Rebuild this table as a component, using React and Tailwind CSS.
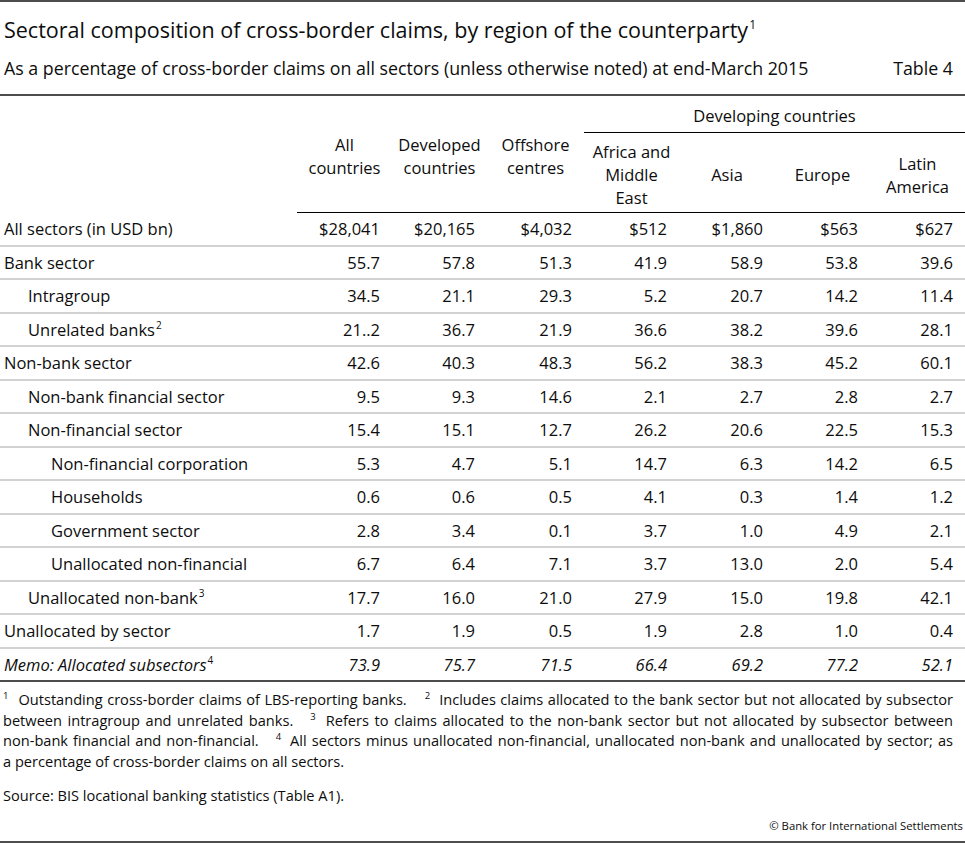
import React from 'react';

const rows = [
  { label: 'All sectors (in USD bn)', lvl: 0, v: ['$28,041', '$20,165', '$4,032', '$512', '$1,860', '$563', '$627'] },
  { label: 'Bank sector', lvl: 0, v: ['55.7', '57.8', '51.3', '41.9', '58.9', '53.8', '39.6'] },
  { label: 'Intragroup', lvl: 1, v: ['34.5', '21.1', '29.3', '5.2', '20.7', '14.2', '11.4'] },
  { label: 'Unrelated banks', sup: '2', lvl: 1, v: ['21..2', '36.7', '21.9', '36.6', '38.2', '39.6', '28.1'] },
  { label: 'Non-bank sector', lvl: 0, v: ['42.6', '40.3', '48.3', '56.2', '38.3', '45.2', '60.1'] },
  { label: 'Non-bank financial sector', lvl: 1, v: ['9.5', '9.3', '14.6', '2.1', '2.7', '2.8', '2.7'] },
  { label: 'Non-financial sector', lvl: 1, v: ['15.4', '15.1', '12.7', '26.2', '20.6', '22.5', '15.3'] },
  { label: 'Non-financial corporation', lvl: 2, v: ['5.3', '4.7', '5.1', '14.7', '6.3', '14.2', '6.5'] },
  { label: 'Households', lvl: 2, v: ['0.6', '0.6', '0.5', '4.1', '0.3', '1.4', '1.2'] },
  { label: 'Government sector', lvl: 2, v: ['2.8', '3.4', '0.1', '3.7', '1.0', '4.9', '2.1'] },
  { label: 'Unallocated non-financial', lvl: 2, v: ['6.7', '6.4', '7.1', '3.7', '13.0', '2.0', '5.4'] },
  { label: 'Unallocated non-bank', sup: '3', lvl: 1, v: ['17.7', '16.0', '21.0', '27.9', '15.0', '19.8', '42.1'] },
  { label: 'Unallocated by sector', lvl: 0, v: ['1.7', '1.9', '0.5', '1.9', '2.8', '1.0', '0.4'] },
  { label: 'Memo: Allocated subsectors', sup: '4', lvl: 0, italic: true, v: ['73.9', '75.7', '71.5', '66.4', '69.2', '77.2', '52.1'] },
];

const indent = ['pl-[4px]', 'pl-[28px]', 'pl-[51px]'];
const gridCols = 'grid grid-cols-[297px_95px_95px_97px_95px_96px_95px_95px]';

function Sup({ children }) {
  return <span className="relative -top-[7px] text-[10px] leading-none ml-[1px] not-italic">{children}</span>;
}

function FSup({ children }) {
  return <span className="relative -top-[6px] text-[9.5px] leading-none">{children}</span>;
}

const Gap = ({ w }) => <span className={`inline-block ${w}`} />;

export default function App() {
  return (
    <div className="w-[965px] h-[843px] bg-white text-[#0d0d0d] font-['Open_Sans','Noto_Sans',sans-serif] flex flex-col">
      <div className="h-[2px] bg-[#4d4d4d] shrink-0" />
      <div className="pl-[4px] mt-[14px] h-[28px] text-[21.5px] leading-[28px] whitespace-nowrap">
        Sectoral composition of cross-border claims, by region of the counterparty
        <span className="relative -top-[9px] text-[12px] leading-none ml-[1px]">1</span>
      </div>
      <div className="flex justify-between pl-[4px] pr-[12px] mt-[13px] h-[22px] text-[17.8px] leading-[22px] whitespace-nowrap">
        <span>As a percentage of cross-border claims on all sectors (unless otherwise noted) at end-March 2015</span>
        <span>Table 4</span>
      </div>
      <div className="mt-[15px] h-[2px] bg-[#4d4d4d] shrink-0" />

      {/* Header */}
      <div className={`${gridCols} grid-rows-[37px_80px] text-[16.5px] leading-[23px]`}>
        <div className="row-span-2" />
        <div className="row-span-2 flex items-center justify-center text-center border-b border-black pt-[4px]">All<br />countries</div>
        <div className="row-span-2 flex items-center justify-center text-center border-b border-black pt-[4px]">Developed<br />countries</div>
        <div className="row-span-2 flex items-center justify-center text-center border-b border-black pt-[4px]">Offshore<br />centres</div>
        <div className="col-span-4 flex items-center justify-center border-b border-black pt-[3px]">Developing countries</div>
        <div className="flex items-center justify-center text-center border-b border-black pt-[4px]">Africa and<br />Middle<br />East</div>
        <div className="flex items-center justify-center text-center border-b border-black pt-[4px]">Asia</div>
        <div className="flex items-center justify-center text-center border-b border-black pt-[4px]">Europe</div>
        <div className="flex items-center justify-center text-center border-b border-black pt-[4px]">Latin<br />America</div>
      </div>

      {/* Body */}
      <div className="text-[16.5px]">
        {rows.map((r, i) => (
          <div
            key={i}
            className={`${gridCols} h-[33.5px] items-center pt-[2px] ${i === rows.length - 1 ? 'border-b-2 border-[#4d4d4d]' : 'border-b-2 border-[#d2d2d2]'} ${r.italic ? 'italic' : ''}`}
          >
            <div className={`${indent[r.lvl]} whitespace-nowrap`}>
              {r.label}
              {r.sup && <Sup>{r.sup}</Sup>}
            </div>
            {r.v.map((x, j) => (
              <div key={j} className="text-right pr-[12px]">{x}</div>
            ))}
          </div>
        ))}
      </div>

      {/* Footnotes */}
      <div className="pl-[3px] pr-[12px] pt-[7px] text-[14.6px] leading-[20.7px] whitespace-nowrap">
        <div className="[text-align-last:justify] text-justify">
          <FSup>1</FSup><Gap w="w-[10px]" />Outstanding cross-border claims of LBS-reporting banks.<Gap w="w-[18px]" /><FSup>2</FSup><Gap w="w-[9px]" />Includes claims allocated to the bank sector but not allocated by subsector
        </div>
        <div className="[text-align-last:justify] text-justify">
          between intragroup and unrelated banks.<Gap w="w-[17px]" /><FSup>3</FSup><Gap w="w-[10px]" />Refers to claims allocated to the non-bank sector but not allocated by subsector between
        </div>
        <div className="[text-align-last:justify] text-justify">
          non-bank financial and non-financial.<Gap w="w-[17px]" /><FSup>4</FSup><Gap w="w-[9px]" />All sectors minus unallocated non-financial, unallocated non-bank and unallocated by sector; as
        </div>
        <div>a percentage of cross-border claims on all sectors.</div>
        <div className="mt-[13px]">Source: BIS locational banking statistics (Table A1).</div>
      </div>
      <div className="flex-1" />
      <div className="pr-[2px] text-right text-[11.3px] leading-[16px] pb-[7px]">© Bank for International Settlements</div>
      <div className="h-[2px] bg-[#4d4d4d] shrink-0" />
    </div>
  );
}
